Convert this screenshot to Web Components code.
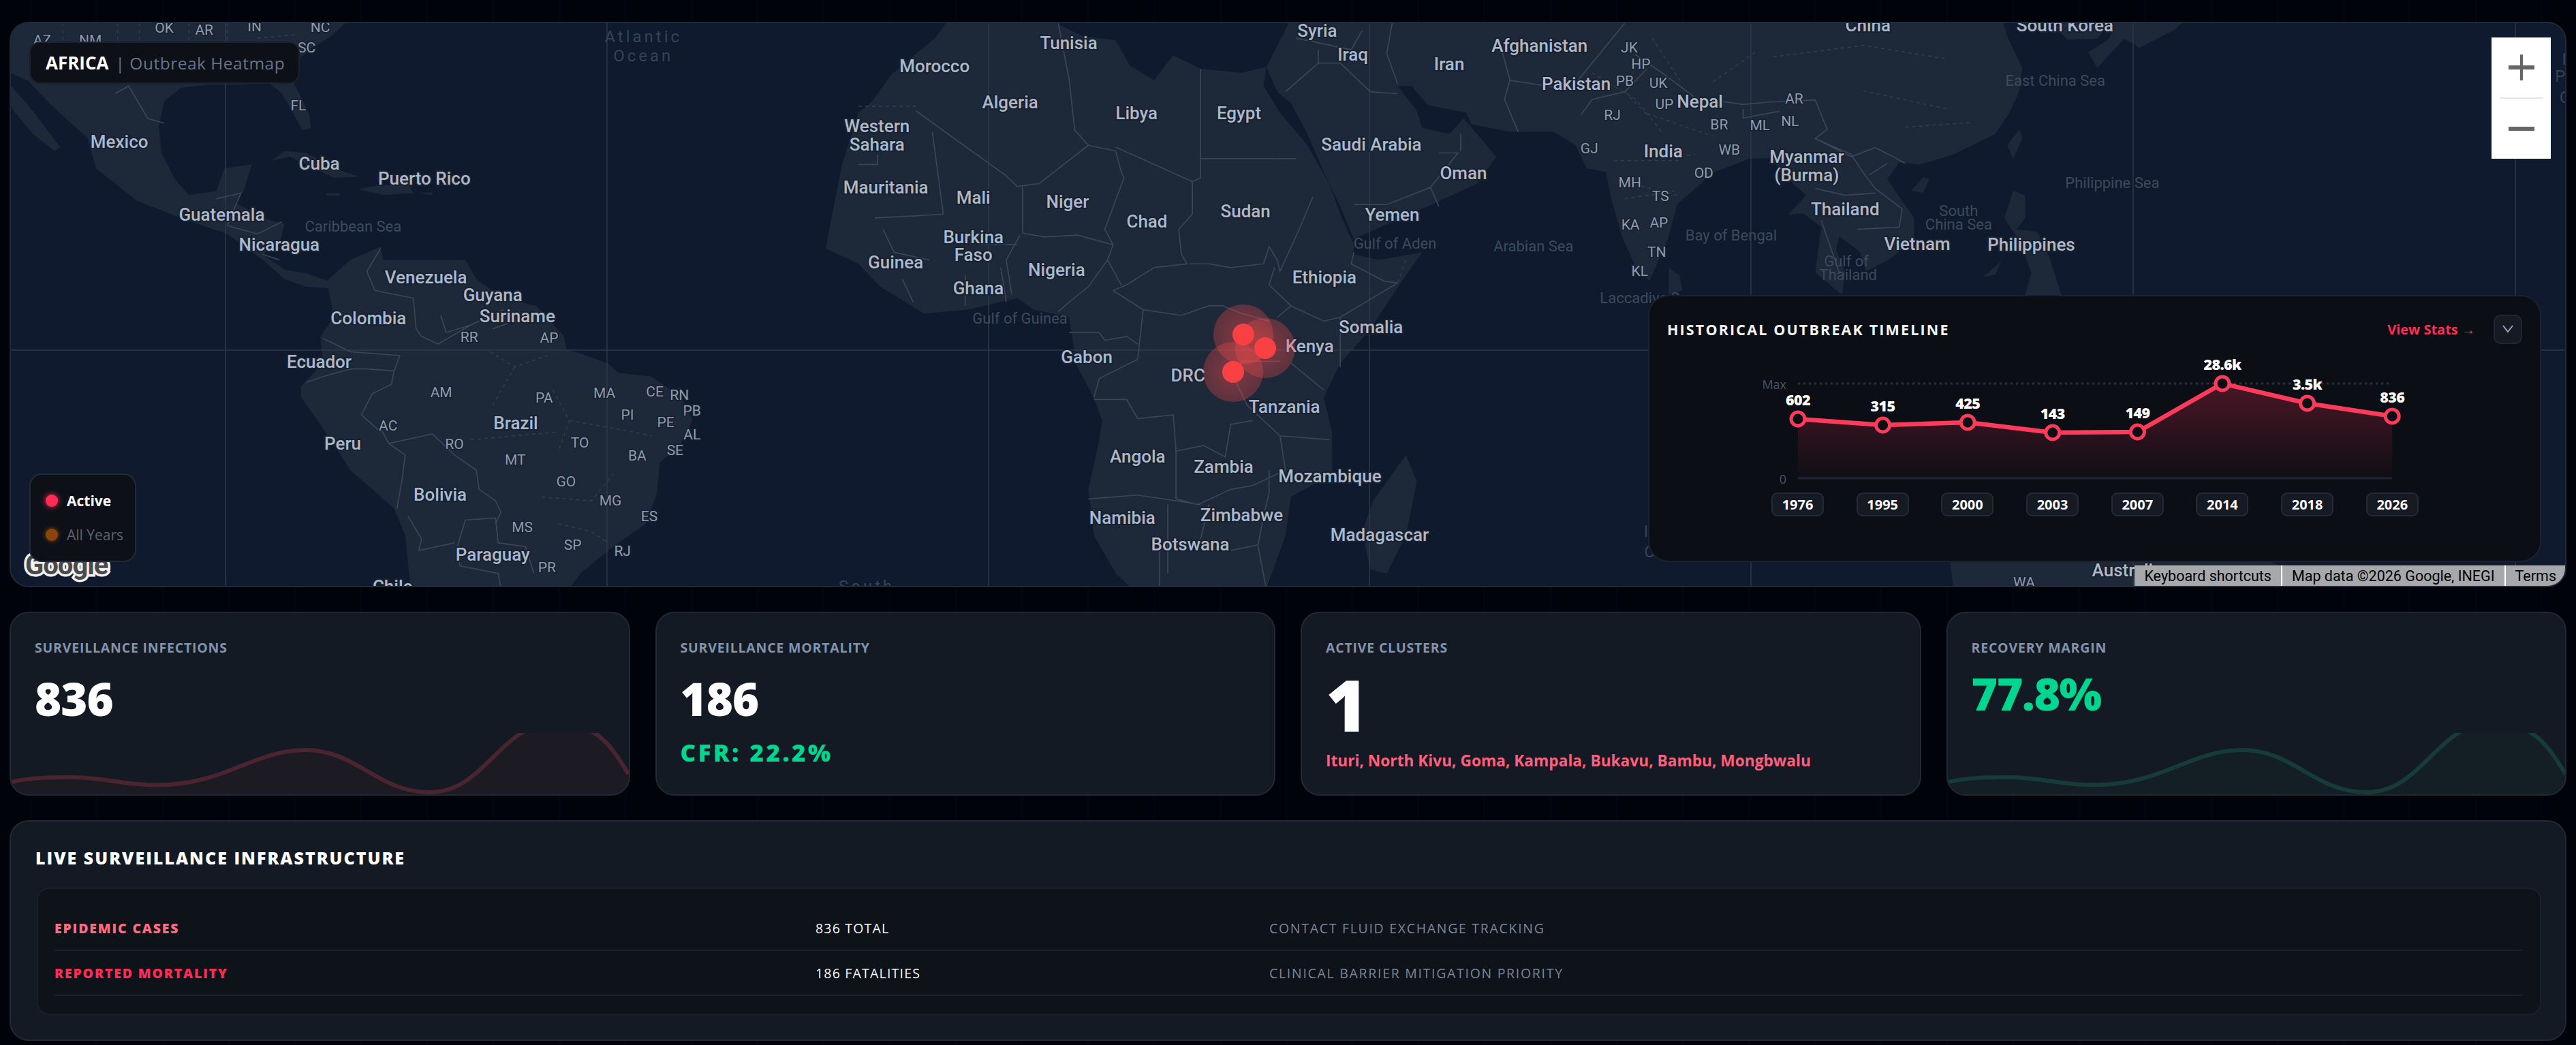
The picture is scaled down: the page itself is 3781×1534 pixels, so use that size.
<!DOCTYPE html>
<html lang="en">
<head>
<meta charset="utf-8">
<title>Africa Outbreak Heatmap</title>
<style>
  html, body { margin: 0; height: 100%; overflow: hidden; }
  body {
    background:
      repeating-linear-gradient(90deg, transparent 0 43px, rgba(26,36,56,0.07) 43px 47px, transparent 47px 97px),
      #01030a;
    font-family: "Open Sans", "Noto Sans", sans-serif;
    color: #fff;
    box-sizing: border-box;
    padding: 32px 14px 0;
    display: flex;
    flex-direction: column;
    gap: 36px;
  }
  .stats { display: grid; grid-template-columns: repeat(4, 1fr); gap: 37px; }
</style>
</head>
<body>
<outbreak-map></outbreak-map>
<div class="stats">
  <stat-card label="SURVEILLANCE INFECTIONS" spark="red">
    <span slot="value">836</span>
  </stat-card>
  <stat-card label="SURVEILLANCE MORTALITY">
    <span slot="value">186</span>
    <span slot="sub" class="cfr">CFR: 22.2%</span>
  </stat-card>
  <stat-card label="ACTIVE CLUSTERS" size="big">
    <span slot="value">1</span>
    <span slot="sub" class="places">Ituri, North Kivu, Goma, Kampala, Bukavu, Bambu, Mongbwalu</span>
  </stat-card>
  <stat-card label="RECOVERY MARGIN" spark="green" tone="green">
    <span slot="value">77.8%</span>
  </stat-card>
</div>
<surveillance-panel title="LIVE SURVEILLANCE INFRASTRUCTURE">
  <surveillance-row name="EPIDEMIC CASES" count="836 TOTAL" note="CONTACT FLUID EXCHANGE TRACKING" color="#ff6b81"></surveillance-row>
  <surveillance-row name="REPORTED MORTALITY" count="186 FATALITIES" note="CLINICAL BARRIER MITIGATION PRIORITY" color="#ff2d55"></surveillance-row>
</surveillance-panel>

<script>
// the map was traced from three crops, each with its own scale
const FRAMES = {
  1: [0, 0, 0.8036, 0.5612],
  2: [1260, 0, 0.8036, 0.5612],
  3: [2400, 0, 0.881, 0.3333],
  4: [2400, 420, 0.881, 0.3333]
};

const LAND = {
  1: [
    'M18,58 L632,58 L605,95 L570,125 L540,160 L528,195 L545,240 L565,300 L568,335 L552,340 L535,295 L515,245 L490,215 L440,222 L380,222 L330,230 L300,265 L290,330 L295,400 L320,470 L345,510 L395,500 L410,440 L460,430 L445,500 L430,530 L490,575 L520,585 L510,640 L480,665 L520,705 L560,715 L600,735 L610,755 L560,750 L520,730 L480,680 L415,612 L330,570 L250,525 L175,440 L160,360 L120,310 L90,270 L50,210 L18,190 Z',
    'M18,220 L60,290 L110,385 L100,395 L60,350 L25,290 L18,270 Z',
    'M495,420 L520,395 L560,400 L610,440 L655,462 L610,465 L580,445 L530,410 Z',
    'M655,495 L690,485 L745,480 L755,505 L700,510 Z',
    'M765,505 L790,503 L790,510 Z M595,505 L620,505 L620,512 L597,512 Z',
    'M600,730 L640,680 L695,645 L700,680 L780,680 L850,680 L870,730 L920,780 L980,800 L1030,880 L1035,915 L1060,925 L1110,950 L1130,975 L1190,985 L1245,1040 L1265,1100 L1240,1170 L1205,1210 L1200,1290 L1180,1370 L1120,1430 L1060,1500 L1040,1540 L750,1540 L740,1400 L720,1330 L640,1230 L590,1120 L550,1040 L550,1010 L590,950 L585,880 L610,830 L600,760 Z'
  ],
  2: [
    'M-60,650 L-30,430 L0,295 L25,265 L60,195 L110,135 L140,100 L160,60 L360,60 L410,95 L470,105 L495,170 L540,210 L575,145 L625,180 L700,190 L745,175 L740,225 L770,295 L820,380 L860,480 L880,560 L905,640 L905,665 L950,680 L1030,660 L1000,720 L930,870 L880,950 L850,1040 L865,1130 L865,1240 L790,1300 L780,1400 L745,1540 L500,1540 L470,1500 L430,1400 L420,1280 L440,1150 L445,1100 L430,1040 L400,960 L390,880 L385,830 L320,810 L290,780 L200,810 L120,820 L40,750 L0,690 Z',
    'M790,50 L1568,50 L1568,440 L1485,534 L1462,654 L1445,735 L1420,700 L1395,620 L1375,520 L1365,450 L1330,440 L1310,380 L1270,345 L1190,345 L1120,325 L1110,295 L1040,275 L1010,225 L985,225 L1020,290 L1030,335 L1080,350 L1105,310 L1118,330 L1165,410 L1130,480 L1040,540 L960,590 L905,625 L880,540 L850,450 L820,350 L790,270 L765,240 L745,175 Z',
    'M1000,1190 L1020,1260 L1000,1400 L965,1500 L935,1490 L920,1390 L940,1310 Z',
    'M1480,700 L1500,720 L1505,760 L1480,770 Z'
  ],
  3: [
    'M-200,90 L612,90 L620,160 L645,300 L640,400 L625,490 L600,590 L530,680 L475,725 L440,715 L420,790 L465,960 L465,1050 L425,1140 L385,1195 L375,1110 L340,1040 L335,1100 L350,1200 L345,1300 L300,1200 L310,1000 L280,940 L255,945 L285,860 L255,790 L225,695 L190,700 L130,760 L70,900 L55,1050 L24,1237 L0,1100 L-20,900 L-100,500 Z',
    'M700,90 L795,90 L770,170 L720,175 L705,130 Z',
    'M800,90 L915,90 L900,130 L840,210 L815,170 L790,240 L770,300 L755,230 L790,170 Z',
    'M640,570 L620,640 L630,700 L645,610 Z',
    'M480,780 L460,840 L480,850 L490,790 Z',
    'M630,840 L650,860 L650,960 L635,1010 L670,1020 L690,1130 L710,1300 L650,1300 L660,1200 L640,1060 L615,960 Z',
    'M610,1150 L580,1220 L600,1210 Z'
  ],
  4: ['M525,1215 L1060,1215 L1080,1240 L1000,1330 L530,1330 Z']
};

const BORDERS = {
  1: 'M695,650 L670,710 L685,760 L755,780 L760,860 L770,880 L800,900 L860,850 L920,810 M805,825 L815,870 L860,850 M900,860 L960,830 M590,885 L640,920 L730,930 L720,970 L715,1005 L680,1030 L660,1085 L695,1130 M560,1000 L590,985 L640,965 L670,965 L720,970 M695,1120 L710,1160 L790,1135 L830,1190 L870,1230 L875,1280 L905,1310 L915,1340 L905,1370 M710,1160 L740,1190 L735,1250 L725,1330 M850,1360 L905,1355 L910,1420 L960,1430 L975,1500 M835,1430 L850,1360 M745,1350 L770,1410 L765,1440 M765,1440 L830,1420 M835,1430 L840,1480 L910,1500 L915,1540 M210,245 L235,225 L270,310 L300,322 M395,520 L440,505 L415,590 M415,590 L470,612 L515,580 M480,665 L510,680',
  2: 'M105,290 L270,460 L290,488 L330,480 L420,380 M135,345 L155,560 L100,565 L30,570 M0,430 L35,430 L35,405 M365,60 L385,210 L395,340 L420,380 L470,395 L480,450 M625,180 L625,415 M625,415 L800,415 M470,385 L610,475 L625,465 L625,415 M610,475 L610,560 L585,600 L590,665 L600,690 L540,700 L490,745 L465,760 M480,450 L485,465 L450,600 L465,640 L455,680 L480,745 M300,488 L300,610 L340,620 L400,615 L465,640 M295,615 L270,680 L280,770 M455,680 L420,750 L385,790 L365,815 M605,690 L640,690 L680,700 L740,690 L750,645 L765,680 L770,710 L805,600 L830,515 M760,700 L750,745 L790,800 L850,840 L880,830 L985,740 M880,830 L880,960 M905,660 L900,690 L960,735 L985,740 M465,760 L520,810 L590,825 L640,800 L665,800 L700,820 L750,840 M765,830 L790,800 M790,950 L850,1020 M700,945 L770,945 M700,945 L690,1000 L710,1060 L770,1140 L860,1150 M430,1045 L490,1045 L510,1095 L575,1085 L580,1180 L630,1165 L670,1195 L680,1110 L720,1100 M520,810 L510,940 L440,990 L430,1040 M385,870 L440,870 L450,890 L490,880 L510,900 M420,1305 L510,1295 L580,1310 L625,1320 M580,1180 L580,1305 L620,1320 L680,1280 L720,1270 L780,1230 L770,1140 M750,1230 L750,1290 L740,1350 L730,1425 L680,1440 M565,1320 L565,1500 M640,1320 L620,1440 M550,1440 L550,1540 M730,1430 L745,1540 M220,640 L290,640 M45,600 L65,660 L130,680 M195,720 L195,800 M260,700 L270,790 M80,730 L100,790 M905,535 L965,535 L1045,490 L1095,400 L1060,400 M1045,490 L1060,540 M780,240 L840,165 L880,165 L935,240 L985,245 M840,130 L840,165 M800,100 L900,130 L920,80 M975,60 L965,140 L985,220 M1175,130 L1190,210 L1180,260 L1205,345 M1190,210 L1300,235 L1400,60 M1320,300 L1340,260 L1400,240 L1440,180 M1100,350 L1100,395',
  3: 'M0,240 L50,330 L100,430 L180,460 L220,450 L300,440 L320,570 L300,610 L360,690 L400,650 L430,690 L450,720 M180,480 L180,520 L240,490 M300,610 L360,680 L380,760 L400,830 L445,920 L440,1000 M300,830 L350,860 L400,850 M310,970 L340,1200 M420,720 L390,770 M370,1010 L440,1000'
};

const DASHES = {
  1: 'M115,60 L115,115 M215,60 L215,110 M255,60 L255,110 M345,60 L345,120 M415,60 L415,120 M470,100 L545,90 M900,1060 L940,960 M1010,1020 L1040,1100 L1020,1180 M1040,1100 L1120,1120 L1190,1140 M990,1300 L1080,1310 L1120,1240 M1020,1370 L1080,1390 L1110,1420 M895,920 L940,960 L1000,930 M860,1150 L1020,1130',
  2: 'M0,278 L105,278 M1000,680 L985,740 M1340,190 L1420,260 L1470,350 M1380,420 L1500,420 M1400,520 L1490,500 M1400,240 L1440,300 M1450,100 L1500,210 M760,415 L800,415',
  3: 'M230,250 L380,200 L520,260 M130,360 L200,230 M380,400 L520,480 M450,560 L560,540 M20,500 L130,600 M30,700 L100,680 M10,820 L70,860'
};

// [text, frame, x, y, kind]  kind: c country, s state, w water, o ocean
const LABELS = [
  ['OK',1,300,73,'s'],['AR',1,373,78,'s'],['IN',1,465,70,'s'],['NC',1,585,72,'s'],['AZ',1,77,105,'s'],['NM',1,165,105,'s'],['SC',1,560,125,'s'],['FL',1,545,276,'s'],
  ['Mexico',1,218,370,'c'],['Cuba',1,583,428,'c'],['Puerto Rico',1,775,466,'c'],['Guatemala',1,405,561,'c'],['Caribbean Sea',1,645,592,'w'],['Nicaragua',1,510,640,'c'],
  ['Venezuela',1,778,725,'c'],['Guyana',1,900,772,'c'],['Suriname',1,945,827,'c'],['RR',1,857,882,'s'],['AP',1,1003,883,'s'],['Colombia',1,673,832,'c'],['Ecuador',1,583,947,'c'],
  ['AM',1,806,1026,'s'],['PA',1,994,1040,'s'],['MA',1,1104,1028,'s'],['CE',1,1196,1024,'s'],['RN',1,1241,1034,'s'],['PB',1,1264,1075,'s'],['PI',1,1146,1086,'s'],['PE',1,1216,1104,'s'],
  ['AC',1,709,1114,'s'],['Brazil',1,942,1107,'c'],['AL',1,1264,1137,'s'],['Peru',1,626,1160,'c'],['RO',1,830,1162,'s'],['TO',1,1059,1158,'s'],['SE',1,1233,1177,'s'],['BA',1,1164,1192,'s'],
  ['MT',1,941,1203,'s'],['GO',1,1034,1260,'s'],['Bolivia',1,804,1294,'c'],['MG',1,1115,1310,'s'],['ES',1,1186,1350,'s'],['MS',1,954,1379,'s'],['SP',1,1046,1425,'s'],['RJ',1,1137,1441,'s'],
  ['Paraguay',1,900,1450,'c'],['PR',1,999,1484,'s'],['Chile',1,717,1535,'c'],['Atlantic',1,1175,97,'o'],['Ocean',1,1175,147,'o'],['South',1,1583,1535,'o'],
  ['Syria',2,838,80,'c'],['Tunisia',2,384,113,'c'],['Iraq',2,903,142,'c'],['Afghanistan',2,1244,120,'c'],['JK',2,1408,124,'s'],['HP',2,1429,167,'s'],['Iran',2,1079,167,'c'],['Morocco',2,139,172,'c'],
  ['PB',2,1400,212,'s'],['UK',2,1461,217,'s'],['Pakistan',2,1311,220,'c'],['Algeria',2,277,267,'c'],['UP',2,1472,272,'s'],['Libya',2,508,295,'c'],['Egypt',2,695,295,'c'],['RJ',2,1377,301,'s'],
  ['Western',2,34,330,'c'],['Sahara',2,34,377,'c'],['Saudi Arabia',2,937,378,'c'],['GJ',2,1335,388,'s'],['India',2,1470,396,'c'],['OD',2,1544,453,'s'],['Oman',2,1105,452,'c'],['MH',2,1409,477,'s'],
  ['Mauritania',2,50,490,'c'],['Mali',2,210,516,'c'],['Niger',2,382,527,'c'],['TS',2,1465,514,'s'],['Chad',2,527,580,'c'],['Sudan',2,707,552,'c'],['Yemen',2,975,561,'c'],['KA',2,1410,588,'s'],['AP',2,1462,582,'s'],
  ['Burkina',2,210,620,'c'],['Faso',2,210,667,'c'],['Gulf of Aden',2,980,637,'w'],['Arabian Sea',2,1233,645,'w'],['TN',2,1458,660,'s'],['Guinea',2,68,686,'c'],['Nigeria',2,362,706,'c'],['KL',2,1427,709,'s'],
  ['Ghana',2,219,754,'c'],['Ethiopia',2,851,726,'c'],['Laccadive Sea',2,1442,780,'w'],['Gulf of Guinea',2,295,833,'w'],['Somalia',2,936,856,'c'],['Kenya',2,824,906,'c'],['Gabon',2,417,934,'c'],['DRC',2,602,982,'c'],
  ['Tanzania',2,778,1063,'c'],['Angola',2,510,1193,'c'],['Zambia',2,667,1220,'c'],['Mozambique',2,861,1246,'c'],['Namibia',2,482,1355,'c'],['Zimbabwe',2,700,1347,'c'],['Madagascar',2,952,1398,'c'],['Botswana',2,606,1423,'c'],
  ['Indian',2,1490,1390,'o'],['Ocean',2,1490,1443,'o'],
  ['China',3,388,110,'c'],['South Korea',3,716,110,'c'],['East China Sea',3,700,355,'w'],['AR',3,265,435,'s'],['Nepal',3,108,447,'c'],['BR',3,140,550,'s'],['ML',3,208,553,'s'],['NL',3,258,535,'s'],['WB',3,157,660,'s'],
  ['Myanmar',3,286,690,'c'],['(Burma)',3,286,770,'c'],['Philippine Sea',3,795,805,'w'],['Thailand',3,350,922,'c'],['South',3,539,928,'w'],['China Sea',3,539,990,'w'],['Vietnam',3,470,1075,'c'],['Philippines',3,660,1078,'c'],
  ['Bay of Bengal',3,160,1038,'w'],['Gulf of',3,352,1150,'w'],['Thailand',3,355,1212,'w'],['North',3,1590,262,'o'],['Pacific',3,1590,335,'o'],['Ocean',3,1590,430,'o'],
  ['Australia',4,820,1250,'c'],['WA',4,648,1305,'s']
];

const GRID_X = [331, 891, 1451, 2010, 2570, 3131, 3692];
const SPOTS = [[1825, 491], [1857, 511], [1810, 546]];

class OutbreakMap extends HTMLElement {
  constructor() {
    super();
    this.attachShadow({ mode: 'open' });
  }

  connectedCallback() {
    this.render();
  }

  frameGroup(frame, content) {
    const [tx, ty, sx, sy] = FRAMES[frame];
    return `<g transform="translate(${tx} ${ty}) scale(${sx} ${sy})">${content}</g>`;
  }

  renderMapSvg() {
    const land = Object.keys(LAND)
      .map(f => this.frameGroup(f, LAND[f].map(d => `<path d="${d}"/>`).join('')))
      .join('');
    const borders = Object.keys(BORDERS)
      .map(f => this.frameGroup(f, `<path class="border" d="${BORDERS[f]}"/>`))
      .join('');
    const dashes = Object.keys(DASHES)
      .map(f => this.frameGroup(f, `<path class="dash" d="${DASHES[f]}"/>`))
      .join('');
    const grid = GRID_X.map(x => `<line class="grid" x1="${x}" y1="0" x2="${x}" y2="900"/>`).join('');
    const labels = LABELS.map(([text, f, x, y, kind]) => {
      const [tx, ty, sx, sy] = FRAMES[f];
      return `<text class="${kind}" x="${tx + x * sx}" y="${ty + y * sy}">${text}</text>`;
    }).join('');
    const spots = SPOTS.map(([x, y]) => `<circle cx="${x}" cy="${y}" r="44" fill="url(#halo)"/>`).join('')
      + SPOTS.map(([x, y]) => `<circle cx="${x}" cy="${y}" r="16" fill="#f94144"/>`).join('');

    return `
      <svg viewBox="16 34 3749 826" preserveAspectRatio="none">
        <defs>
          <radialGradient id="halo">
            <stop offset="0" stop-color="#ff4d4d" stop-opacity="0.45"/>
            <stop offset="1" stop-color="#ff4d4d" stop-opacity="0.28"/>
          </radialGradient>
        </defs>
        <g fill="#1d2839">${land}</g>
        ${grid}
        <line class="grid" x1="0" y1="514" x2="3781" y2="514"/>
        ${borders}
        ${dashes}
        ${labels}
        ${spots}
        <text class="google" x="37" y="843">Google</text>
      </svg>`;
  }

  render() {
    this.shadowRoot.innerHTML = `
      <style>
        :host {
          display: block;
          position: relative;
          height: 830px;
          box-sizing: border-box;
          border: 2px solid #232a37;
          border-radius: 28px;
          background: #0f1a2e;
          overflow: hidden;
        }
        svg {
          position: absolute;
          inset: 0;
          width: 100%;
          height: 100%;
        }
        .border { fill: none; stroke: #3a4656; stroke-width: 1.7; vector-effect: non-scaling-stroke; }
        .dash { fill: none; stroke: #333f50; stroke-width: 1.4; stroke-dasharray: 5 5; vector-effect: non-scaling-stroke; }
        .grid { stroke: #2f3a4b; stroke-width: 1.4; }
        text { font-family: Roboto, "Liberation Sans", sans-serif; text-anchor: middle; dominant-baseline: central; }
        .c { font-size: 26px; font-weight: 500; fill: #adb8ca; stroke: #18212f; stroke-width: 4px; paint-order: stroke; }
        .s { font-size: 21px; fill: #8f9bae; stroke: #18212f; stroke-width: 3px; paint-order: stroke; }
        .w { font-size: 22px; fill: #3d4a5c; }
        .o { font-size: 24px; fill: #35425a; letter-spacing: 4px; }
        .google { font-size: 40px; font-weight: 700; text-anchor: start; dominant-baseline: auto; fill: #4a4a4a; stroke: #f1f1f1; stroke-width: 7px; paint-order: stroke; letter-spacing: -1px; }
        .title-chip {
          position: absolute;
          left: 27px;
          top: 27px;
          width: 397px;
          height: 62px;
          box-sizing: border-box;
          display: flex;
          align-items: center;
          gap: 10px;
          padding-left: 22px;
          background: #0d1117;
          border: 2px solid #1c222c;
          border-radius: 16px;
          font-size: 24.5px;
          letter-spacing: 0.5px;
          color: #64748b;
        }
        .title-chip b { color: #fff; font-size: 26px; font-weight: 700; letter-spacing: 0; }
        .legend {
          position: absolute;
          left: 27px;
          bottom: 35px;
          width: 157px;
          height: 130px;
          box-sizing: border-box;
          display: flex;
          flex-direction: column;
          justify-content: center;
          gap: 20px;
          padding-left: 22px;
          background: #0d1117;
          border: 2px solid #232a37;
          border-radius: 18px;
          font-size: 21px;
        }
        .legend div { display: flex; align-items: center; gap: 13px; height: 30px; }
        .legend i { width: 18px; height: 18px; border-radius: 50%; }
        .legend .on { font-weight: 700; color: #fff; }
        .legend .on i { background: #ff2d55; box-shadow: 0 0 8px #ff2d55; }
        .legend .off { color: #5b6371; }
        .legend .off i { background: #8a450f; box-shadow: 0 0 6px #8a450f; }
        .zoom {
          position: absolute;
          right: 21px;
          top: 21px;
          width: 87px;
          height: 178px;
          background: #fff;
          display: flex;
          flex-direction: column;
          align-items: center;
        }
        .zoom button { flex: 1; width: 100%; border: 0; padding: 0; background: none; display: flex; align-items: center; justify-content: center; }
        .zoom hr { width: 64px; height: 2px; margin: 0; border: 0; background: #e6e6e6; }
        .attribution {
          position: absolute;
          right: -1px;
          bottom: -1px;
          display: flex;
          height: 31px;
          background: #a6a8ac;
          font-family: Roboto, "Liberation Sans", sans-serif;
          font-size: 21.5px;
          color: #000;
        }
        .attribution span { display: flex; align-items: center; padding: 0 14px; border-left: 2px solid #fff; }
        .attribution span:first-child { border-left: 0; }
      </style>
      ${this.renderMapSvg()}
      <div class="title-chip"><b>AFRICA</b><span>| Outbreak Heatmap</span></div>
      <div class="legend">
        <div class="on"><i></i>Active</div>
        <div class="off"><i></i>All Years</div>
      </div>
      <div class="zoom">
        <button aria-label="Zoom in">
          <svg style="position:static;width:38px;height:38px" viewBox="0 0 38 38"><path d="M17 0h4v38h-4z M0 16h38v6H0z" fill="#666"/></svg>
        </button>
        <hr>
        <button aria-label="Zoom out">
          <svg style="position:static;width:38px;height:38px" viewBox="0 0 38 38"><path d="M0 16h38v6H0z" fill="#666"/></svg>
        </button>
      </div>
      <timeline-card></timeline-card>
      <div class="attribution">
        <span>Keyboard shortcuts</span><span>Map data ©2026 Google, INEGI</span><span>Terms</span>
      </div>
    `;
  }
}

class TimelineCard extends HTMLElement {
  constructor() {
    super();
    this.attachShadow({ mode: 'open' });
  }

  connectedCallback() {
    this.render();
  }

  render() {
    const years = ['1976', '1995', '2000', '2003', '2007', '2014', '2018', '2026'];
    const values = ['602', '315', '425', '143', '149', '28.6k', '3.5k', '836'];
    const ys = [615, 624, 620, 635, 634, 563, 592, 611];
    // chart box starts at y 520 on the page, x measured from the card's left edge
    const xs = years.map((_, i) => 218 + i * 124.6);
    const points = xs.map((x, i) => `${x},${ys[i] - 520}`);
    const line = points.join(' ');
    const area = `${xs[0]},182 ${line} ${xs[7]},182`;

    const dots = xs.map((x, i) => `<circle cx="${x}" cy="${ys[i] - 520}" r="10" fill="#0b0e14" stroke="#ff3b5c" stroke-width="5"/>`).join('');
    const tags = xs.map((x, i) => `<text class="val" x="${x}" y="${ys[i] - 520 - 29}">${values[i]}</text>`).join('');
    const pills = years.map(y => `<span class="pill">${y}</span>`).join('');

    this.shadowRoot.innerHTML = `
      <style>
        :host {
          position: absolute;
          right: 35px;
          bottom: 35px;
          width: 1311px;
          height: 392px;
          box-sizing: border-box;
          display: flex;
          flex-direction: column;
          padding: 26px 26px 0;
          background: #0b0e14;
          border: 2px solid #1c222c;
          border-radius: 30px;
        }
        header { display: flex; align-items: center; height: 44px; }
        h2 { margin: 0; font-size: 21.5px; font-weight: 700; letter-spacing: 2.15px; color: #f1f5f9; }
        a { margin-left: auto; font-size: 20px; font-weight: 700; color: #ff2d55; }
        button {
          margin-left: 27px;
          width: 42px;
          height: 43px;
          box-sizing: border-box;
          display: flex;
          align-items: center;
          justify-content: center;
          padding: 0;
          background: #151a23;
          border: 2px solid #1f2733;
          border-radius: 10px;
        }
        svg.chart { display: block; margin: 15px 0 0 -26px; width: 1311px; height: 190px; overflow: visible; flex: none; }
        .val { font: 800 21.5px "Open Sans", sans-serif; fill: #fff; text-anchor: middle; dominant-baseline: central; letter-spacing: -0.6px; }
        .axis { font: 400 18px "Open Sans", sans-serif; fill: #475569; text-anchor: end; dominant-baseline: central; }
        .pills { display: flex; gap: 47.7px; margin: 13px 0 0 153px; }
        .pill {
          width: 77px;
          height: 35px;
          box-sizing: border-box;
          flex: none;
          display: flex;
          align-items: center;
          justify-content: center;
          background: #151a23;
          border: 2px solid #232b38;
          border-radius: 9px;
          font-size: 20px;
          font-weight: 700;
          color: #f8fafc;
        }
      </style>
      <header>
        <h2>HISTORICAL OUTBREAK TIMELINE</h2>
        <a>View Stats →</a>
        <button aria-label="Collapse">
          <svg width="18" height="12" viewBox="0 0 18 12"><path d="M2 1l7 9 7-9" fill="none" stroke="#94a3b8" stroke-width="2"/></svg>
        </button>
      </header>
      <svg class="chart" viewBox="0 0 1311 190">
        <defs>
          <linearGradient id="fade" x1="0" y1="0" x2="0" y2="1">
            <stop offset="0" stop-color="#ff2d55" stop-opacity="0.26"/>
            <stop offset="1" stop-color="#ff2d55" stop-opacity="0.02"/>
          </linearGradient>
        </defs>
        <line x1="218" y1="43" x2="1090" y2="43" stroke="#2a3342" stroke-width="3" stroke-dasharray="3 5"/>
        <line x1="218" y1="182" x2="1090" y2="182" stroke="#1e2633" stroke-width="3"/>
        <polygon points="${area}" fill="url(#fade)"/>
        <polyline points="${line}" fill="none" stroke="#ff3b5c" stroke-width="6.5"/>
        ${dots}
        ${tags}
        <text class="axis" x="201" y="44">Max</text>
        <text class="axis" x="201" y="183">0</text>
      </svg>
      <div class="pills">${pills}</div>
    `;
  }
}

class StatCard extends HTMLElement {
  constructor() {
    super();
    this.attachShadow({ mode: 'open' });
  }

  connectedCallback() {
    this.render();
  }

  renderSpark(kind) {
    if (!kind) return '';
    const stroke = kind === 'red' ? '#4a2530' : '#173c38';
    const fill = kind === 'red' ? 'rgba(255,45,85,0.035)' : 'rgba(0,214,143,0.025)';
    const d = 'M0,72 C30,65 60,65 88,65 C140,65 170,78 228,76 C320,72 360,25 434,25 C510,25 540,87 617,87 C700,87 720,-15 803,-15 C870,-15 890,30 910,60';
    return `
      <svg class="spark" viewBox="0 0 910 90" preserveAspectRatio="none">
        <path d="${d} L910,90 L0,90 Z" fill="${fill}"/>
        <path d="${d}" fill="none" stroke="${stroke}" stroke-width="6"/>
      </svg>`;
  }

  render() {
    const label = this.getAttribute('label') || '';
    const big = this.getAttribute('size') === 'big';
    const green = this.getAttribute('tone') === 'green';

    this.shadowRoot.innerHTML = `
      <style>
        :host {
          display: flex;
          flex-direction: column;
          position: relative;
          height: 270px;
          box-sizing: border-box;
          padding: 39px 35px 0;
          background: #141a23;
          border: 2px solid #222935;
          border-radius: 28px;
          overflow: hidden;
        }
        .label { font-size: 19.5px; font-weight: 700; line-height: 24px; letter-spacing: 0.8px; color: #8293ad; }
        .value {
          margin-top: ${big ? 19 : green ? 21 : 29}px;
          font-size: ${big ? 105 : green ? 66 : 67}px;
          font-weight: 800;
          letter-spacing: ${green ? -1.5 : -1}px;
          line-height: ${big ? 104 : 67}px;
          color: ${green ? '#00d68f' : '#fff'};
        }
        ::slotted(.cfr) { display: block; margin-top: 24px; font-size: 35px; font-weight: 800; letter-spacing: 3.5px; color: #00d68f; line-height: 44px; }
        ::slotted(.places) { display: block; margin-top: 16px; font-size: 22.7px; font-weight: 700; color: #ff5f7e; line-height: 30px; white-space: nowrap; }
        .spark { position: absolute; left: 0; bottom: 0; width: 100%; height: 90px; }
      </style>
      <div class="label">${label}</div>
      <div class="value"><slot name="value"></slot></div>
      <slot name="sub"></slot>
      ${this.renderSpark(this.getAttribute('spark'))}
    `;
  }
}

class SurveillancePanel extends HTMLElement {
  constructor() {
    super();
    this.attachShadow({ mode: 'open' });
  }

  connectedCallback() {
    this.shadowRoot.innerHTML = `
      <style>
        :host {
          display: block;
          height: 324px;
          box-sizing: border-box;
          padding: 35px 35px 0 38px;
          background: #141a23;
          border: 2px solid #222935;
          border-radius: 28px;
        }
        h2 { margin: 0 0 0 -2px; font-size: 25px; line-height: 36px; font-weight: 800; letter-spacing: 2px; color: #fff; }
        .table {
          margin-top: 26px;
          height: 187px;
          box-sizing: border-box;
          padding: 25px 26px 0 24px;
          background: #0e1219;
          border: 2px solid #1a202a;
          border-radius: 18px;
        }
      </style>
      <h2>${this.getAttribute('title') || ''}</h2>
      <div class="table"><slot></slot></div>
    `;
  }
}

class SurveillanceRow extends HTMLElement {
  constructor() {
    super();
    this.attachShadow({ mode: 'open' });
  }

  connectedCallback() {
    this.shadowRoot.innerHTML = `
      <style>
        :host {
          display: grid;
          grid-template-columns: 1117px 666px 1fr;
          align-items: center;
          height: 66px;
          box-sizing: border-box;
          border-bottom: 2px solid #1a202a;
          font-size: 19.5px;
          letter-spacing: 1.8px;
        }
        .name { font-weight: 800; color: ${this.getAttribute('color')}; }
        .count { font-weight: 500; color: #f8fafc; letter-spacing: 1.2px; }
        .note { color: #7b8698; letter-spacing: 1.7px; }
      </style>
      <span class="name">${this.getAttribute('name')}</span>
      <span class="count">${this.getAttribute('count')}</span>
      <span class="note">${this.getAttribute('note')}</span>
    `;
  }
}

customElements.define('timeline-card', TimelineCard);
customElements.define('outbreak-map', OutbreakMap);
customElements.define('stat-card', StatCard);
customElements.define('surveillance-panel', SurveillancePanel);
customElements.define('surveillance-row', SurveillanceRow);
</script>
</body>
</html>
